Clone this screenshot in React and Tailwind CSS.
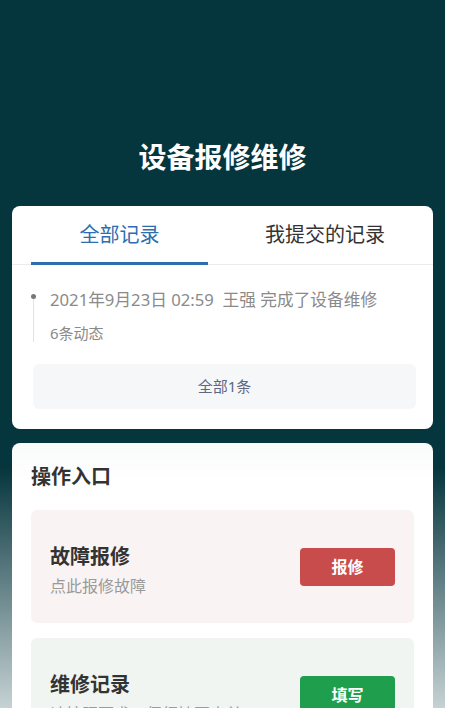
const FONT = {
  fontFamily: '"Noto Sans", "Noto Sans CJK SC", sans-serif',
};

const ActionItem = ({ title, desc, action, bg, btn }) => (
  <div className={`flex h-[113px] items-center justify-between rounded-md pl-[19px] pr-[19px] ${bg}`}>
    <div className="pt-[7px]">
      <div className="text-[20px] font-bold leading-[28px] text-[#333]">
        {title}
      </div>
      <div className="mt-[3px] text-[16px] leading-[24px] text-[#9a9a9a]">
        {desc}
      </div>
    </div>
    <button
      type="button"
      className={`h-[38px] w-[95px] rounded-[4px] text-[16px] font-bold text-white ${btn}`}
    >
      {action}
    </button>
  </div>
);

export default function App() {
  return (
    <div className="min-h-[708px] w-full bg-white" style={FONT}>
      <div className="h-[708px] w-[445px] overflow-hidden bg-[linear-gradient(to_bottom,#05353d_0%,#05353d_66%,#c6d2d4_100%)] px-[12px]">
        {/* Header */}
        <h1 className="pt-[138px] text-center text-[28px] font-bold leading-[38px] text-white">
          设备报修维修
        </h1>

        {/* Records card */}
        <div className="mt-[30px] rounded-lg bg-white pb-[20px]">
          <div className="flex h-[59px] border-b border-[#ececec]">
            <div className="relative ml-[19px] flex w-[177px] items-center justify-center text-[20px] text-[#2e6db0]">
              全部记录
              <span className="absolute bottom-[-1px] left-0 right-0 h-[3px] bg-[#2e6db0]" />
            </div>
            <div className="flex flex-1 items-center justify-center pl-[9px] text-[20px] text-[#333]">
              我提交的记录
            </div>
          </div>

          <div className="relative ml-[21px] mt-[21px] pl-[17px]">
            <span className="absolute left-0 top-[10px] h-[46px] w-px bg-[#e2e2e2]" />
            <span className="absolute left-[-2px] top-[8px] h-[5px] w-[5px] rounded-full bg-[#777]" />
            <div className="text-[16.7px] leading-[28px] text-[#8a8a8a]">
              2021年9月23日 02:59&nbsp;&nbsp;王强 完成了设备维修
            </div>
            <div className="mt-[7px] text-[15px] leading-[24px] text-[#8a8a8a]">
              6条动态
            </div>
          </div>

          <button
            type="button"
            className="mx-[21px] mt-[19px] flex h-[45px] w-[383px] items-center justify-center rounded-md bg-[#f6f7f8] text-[15px] text-[#5a6785]"
          >
            全部1条
          </button>
        </div>

        {/* Actions card */}
        <div className="mt-[14px] rounded-lg bg-[linear-gradient(to_bottom,#f9fafa,#ffffff_40px)] px-[19px] pb-[20px]">
          <div className="pt-[19px] text-[20px] font-bold leading-[30px] text-[#333]">
            操作入口
          </div>
          <div className="mt-[18px] flex flex-col gap-[15px]">
            <ActionItem
              title="故障报修"
              desc="点此报修故障"
              action="报修"
              bg="bg-[#f9f4f3]"
              btn="bg-[#c94c4c]"
            />
            <ActionItem
              title="维修记录"
              desc="请按照要求，仔细填写表单"
              action="填写"
              bg="bg-[#f0f5f2]"
              btn="bg-[#1f9f4e]"
            />
          </div>
        </div>
      </div>
    </div>
  );
}
